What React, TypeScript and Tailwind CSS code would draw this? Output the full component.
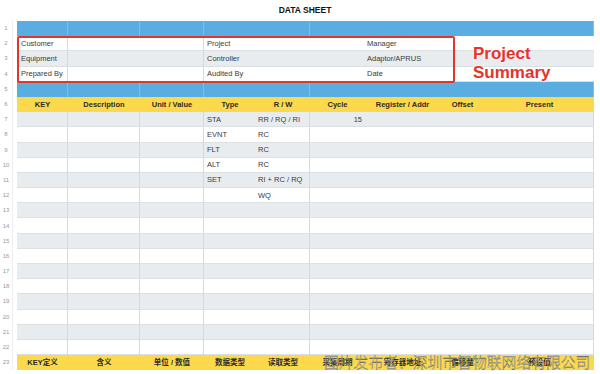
// Data sheet: a spreadsheet screenshot with a "Project Summary" callout

const font = "font-['Liberation_Sans','Noto_Sans_CJK_SC',Arial,sans-serif]";

const colW = ['w-[51px]', 'w-[72px]', 'w-[64px]', 'w-[52px]', 'w-[54px]', 'w-[55px]', 'w-[75px]', 'w-[45px]', 'w-[109px]'];
// columns that carry a vertical rule on their right edge
const ruled = [true, true, true, false, true, false, false, false, true];

const headerEn = ['KEY', 'Description', 'Unit / Value', 'Type', 'R / W', 'Cycle', 'Register / Addr', 'Offset', 'Present'];
const headerZh = ['KEY定义', '含义', '单位 / 数值', '数据类型', '读取类型', '采集周期', '寄存器地址', '偏移量', '预设值'];

const body: Record<number, { type?: string; rw?: string; cycle?: string }> = {
  7: { type: 'STA', rw: 'RR / RQ / RI', cycle: '15' },
  8: { type: 'EVNT', rw: 'RC' },
  9: { type: 'FLT', rw: 'RC' },
  10: { type: 'ALT', rw: 'RC' },
  11: { type: 'SET', rw: 'RI + RC / RQ' },
  12: { rw: 'WQ' },
};

const summary = [
  { n: 2, a: 'Customer', b: 'Project', c: 'Manager' },
  { n: 3, a: 'Equipment', b: 'Controller', c: 'Adaptor/APRUS' },
  { n: 4, a: 'Prepared By', b: 'Audited By', c: 'Date' },
];

function Gutter({ n }: { n: number }) {
  return (
    <div className="w-[17px] shrink-0 flex items-center">
      <div className="w-[13px] h-full flex items-center justify-center border-r border-[#eceef0] text-[6px] text-[#9a9a9a]">
        {n}
      </div>
    </div>
  );
}

function BlueRow({ n }: { n: number }) {
  return (
    <div className="flex h-[15.2px]">
      <Gutter n={n} />
      {colW.map((w, i) => (
        <div key={i} className={`${w} h-full bg-[#5aade0] ${ruled[i] ? 'border-r border-[#7dbfe8]' : ''}`} />
      ))}
    </div>
  );
}

function HeaderRow({ n, labels }: { n: number; labels: string[] }) {
  return (
    <div className="flex h-[15.2px]">
      <Gutter n={n} />
      {colW.map((w, i) => (
        <div
          key={i}
          className={`${w} h-full bg-[#fcd94c] flex items-center justify-center text-[7.5px] font-bold text-[#2a2a2a] whitespace-nowrap`}
        >
          {labels[i]}
        </div>
      ))}
    </div>
  );
}

function DataRow({ n }: { n: number }) {
  const d = body[n] ?? {};
  const bg = n % 2 === 1 ? 'bg-[#e9ecef]' : 'bg-white';
  const text = ['', '', '', d.type ?? '', d.rw ?? '', d.cycle ?? '', '', '', ''];
  return (
    <div className="flex h-[15.2px]">
      <Gutter n={n} />
      {colW.map((w, i) => (
        <div
          key={i}
          className={`${w} h-full ${bg} border-b border-[#dde0e3] ${ruled[i] ? 'border-r border-r-[#d6d9dc]' : ''} flex items-center text-[7.5px] text-[#3a3a3a] whitespace-nowrap ${
            i === 5 ? 'justify-end pr-[3px]' : i === 4 ? 'pl-[2px]' : 'pl-[3px]'
          }`}
        >
          {text[i]}
        </div>
      ))}
    </div>
  );
}

export default function App() {
  return (
    <div className={`relative w-[600px] h-[374px] overflow-hidden bg-white ${font}`}>
      <div className="h-[21px] flex items-center justify-center pl-[10px] text-[8.5px] font-bold text-[#111]">
        DATA SHEET
      </div>

      <BlueRow n={1} />
      {summary.map((r) => (
        <div key={r.n} className="flex h-[15.2px]">
          <Gutter n={r.n} />
          <div className={`flex flex-1 mr-[6px] text-[7.5px] text-[#3a3a3a] border-b border-[#dde0e3] ${r.n === 3 ? 'bg-[#e9ecef]' : 'bg-white'}`}>
            <div className="w-[51px] flex items-center pl-[4px] border-r border-[#d6d9dc]">{r.a}</div>
            <div className="w-[136px] border-r border-[#d6d9dc]" />
            <div className="w-[161px] flex items-center pl-[3px]">{r.b}</div>
            <div className="flex-1 flex items-center pl-[2px]">{r.c}</div>
          </div>
        </div>
      ))}
      <BlueRow n={5} />
      <HeaderRow n={6} labels={headerEn} />
      {Array.from({ length: 16 }, (_, k) => (
        <DataRow key={k} n={k + 7} />
      ))}
      <HeaderRow n={23} labels={headerZh} />

      {/* red callout box around the summary rows */}
      <div className="absolute left-[17px] top-[36px] w-[438px] h-[47px] border-2 border-[#e2352b] rounded-[2px]" />
      <div className="absolute left-[473px] top-[44px] text-[17px] leading-[19px] font-bold text-[#e5332a] [text-shadow:0_0_2px_#fff,0_0_2px_#fff]">
        <div>Project</div>
        <div>Summary</div>
      </div>

      {/* publisher watermark */}
      <div className="absolute left-[324px] top-[353px] text-[14.8px] leading-[18px] font-['Noto_Sans_CJK_SC',sans-serif] font-light text-white/75 [-webkit-text-stroke:0.35px_#555] whitespace-nowrap">
        图片发布者：深圳市智物联网络有限公司
      </div>
    </div>
  );
}
